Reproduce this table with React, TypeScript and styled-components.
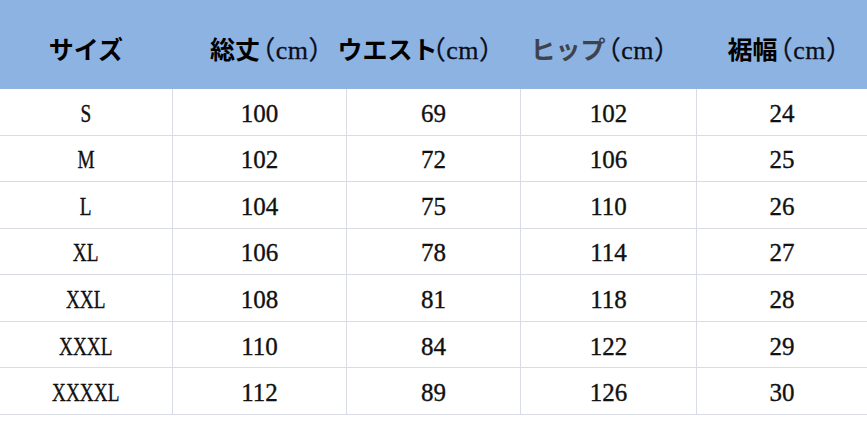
import React from "react";
import styled, { createGlobalStyle } from "styled-components";

const Global = createGlobalStyle`
  html, body { margin: 0; padding: 0; background: #ffffff; }
  body { width: 867px; height: 435px; overflow: hidden; }
`;

const Table = styled.div`
  width: 867px;
  display: flex;
  flex-direction: column;
`;

const HeaderRow = styled.div`
  height: 89px;
  background: #8db3e2;
  display: grid;
  grid-template-columns: 172px 174px 174px 176px 1fr;
  align-items: center;
`;

const HeadCell = styled.div<{ $shift?: number }>`
  display: flex;
  justify-content: center;
  align-items: baseline;
  transform: translate(${(p) => p.$shift ?? 0}px, 3px);
  color: #000000;
  white-space: nowrap;
`;

const HeadLabel = styled.span<{ $muted?: boolean }>`
  font-family: "Noto Sans CJK JP", "Noto Sans", sans-serif;
  font-weight: 700;
  font-size: 25px;
  color: ${(p) => (p.$muted ? "#3f424c" : "#000000")};
`;

const Unit = styled.span<{ $tight?: boolean }>`
  font-family: "Liberation Serif", "Noto Sans CJK JP", serif;
  font-feature-settings: "halt";
  font-weight: 400;
  font-size: 26px;
  color: #0a0d1c;
  -webkit-text-stroke: 0.3px #0a0d1c;
  margin-left: ${(p) => (p.$tight ? "-5px" : "2px")};
  letter-spacing: 0.5px;
`;

const Body = styled.div`
  display: flex;
  flex-direction: column;
`;

const Row = styled.div`
  height: calc(326px / 7);
  box-sizing: border-box;
  border-bottom: 1px solid #d9dce5;
  display: grid;
  grid-template-columns: 172px 174px 174px 176px 1fr;
`;

const Cell = styled.div`
  display: flex;
  align-items: center;
  justify-content: center;
  padding-top: 4px;
  font-family: "Liberation Serif", "DejaVu Serif", serif;
  font-size: 25px;
  color: #111111;
  -webkit-text-stroke: 0.35px #111111;
  & + & {
    border-left: 1px solid #d9dce5;
  }
`;

const Value = styled.span<{ $narrow?: boolean }>`
  display: inline-block;
  transform: scaleX(${(p) => (p.$narrow ? 0.77 : 1)});
`;

const headers: { label: string; unit?: string; shift?: number; muted?: boolean; tight?: boolean }[] = [
  { label: "サイズ" },
  { label: "総丈", unit: "（cm）", shift: 7 },
  { label: "ウエスト", unit: "（cm）", shift: -18, tight: true },
  { label: "ヒップ", unit: "（cm）", shift: -9, muted: true },
  { label: "裾幅", unit: "（cm）", shift: 2 },
];

const rows: string[][] = [
  ["S", "100", "69", "102", "24"],
  ["M", "102", "72", "106", "25"],
  ["L", "104", "75", "110", "26"],
  ["XL", "106", "78", "114", "27"],
  ["XXL", "108", "81", "118", "28"],
  ["XXXL", "110", "84", "122", "29"],
  ["XXXXL", "112", "89", "126", "30"],
];

export default function App() {
  return (
    <>
      <Global />
      <Table>
        <HeaderRow>
          {headers.map((h) => (
            <HeadCell key={h.label} $shift={h.shift}>
              <HeadLabel $muted={h.muted}>{h.label}</HeadLabel>
              {h.unit && <Unit $tight={h.tight}>{h.unit}</Unit>}
            </HeadCell>
          ))}
        </HeaderRow>
        <Body>
          {rows.map((r) => (
            <Row key={r[0]}>
              {r.map((v, i) => (
                <Cell key={i}>
                  <Value $narrow={i === 0}>{v}</Value>
                </Cell>
              ))}
            </Row>
          ))}
        </Body>
      </Table>
    </>
  );
}
